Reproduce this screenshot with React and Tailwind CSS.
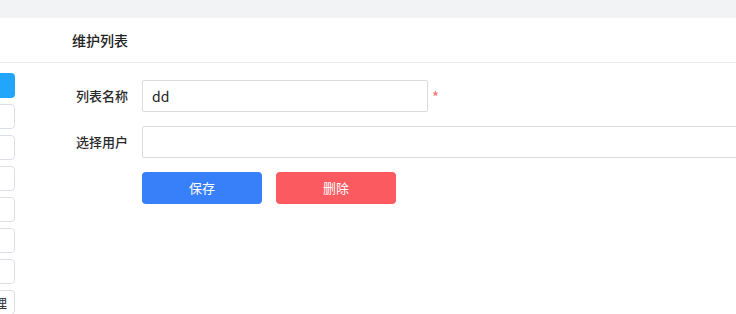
import React from 'react';

const sideItems = ['首页', '消息', '列表', '设置', '数据', '日志'];

const App = () => {
  return (
    <div className="w-[736px] h-[314px] overflow-hidden bg-white text-[#333] font-['Noto_Sans_CJK_SC','Noto_Sans',sans-serif]">
      <div className="h-[18px] bg-[#f2f3f5]" />
      <div className="h-[45px] border-b border-[#e8e9eb] flex items-center pl-[72px]">
        <span className="text-[14px] font-medium text-[#222]">维护列表</span>
      </div>

      <div className="flex">
        {/* sidebar, scrolled mostly out of view */}
        <div className="w-[15px] shrink-0 overflow-hidden">
          <div className="w-[100px] ml-[-85px] flex flex-col gap-[6px] pt-[10px]">
            <div className="h-[25px] rounded-[4px] bg-[#22a6fc] text-white text-[13px] flex items-center justify-center">
              维护列表
            </div>
            {sideItems.map((t) => (
              <div
                key={t}
                className="h-[25px] rounded-[4px] border border-[#dcdfe6] bg-white text-[13px] flex items-center justify-center"
              >
                {t}
              </div>
            ))}
            <div className="h-[25px] rounded-[4px] border border-[#dcdfe6] bg-white text-[13px] flex items-center justify-end pr-[7px]">
              用户管理
            </div>
          </div>
        </div>

        <div className="flex-1 min-w-0">
          <div className="pt-[17px] flex flex-col gap-[14px]">
            <div className="flex items-center">
              <label className="w-[127px] pr-[14px] text-right text-[13px] font-medium text-[#2a2a2a] shrink-0">列表名称</label>
              <div className="w-[286px] h-[32px] border border-[#dcdcdc] rounded-[2px] flex items-center px-[9px] text-[14px] text-[#222] shrink-0">
                dd
              </div>
              <span className="ml-[4px] mt-[3px] text-[#f56c6c] text-[15px]">*</span>
            </div>

            <div className="flex items-center">
              <label className="w-[127px] pr-[14px] text-right text-[13px] font-medium text-[#2a2a2a] shrink-0">选择用户</label>
              <div className="w-[640px] h-[32px] border border-[#dcdcdc] rounded-[2px] shrink-0" />
            </div>

            <div className="flex items-center pl-[127px] gap-[14px]">
              <button className="w-[120px] h-[32px] rounded-[4px] bg-[#3780fa] text-white text-[13px]">
                保存
              </button>
              <button className="w-[120px] h-[32px] rounded-[4px] bg-[#fa5a60] text-white text-[13px]">
                删除
              </button>
            </div>
          </div>
        </div>
      </div>
    </div>
  );
};

export default App;
